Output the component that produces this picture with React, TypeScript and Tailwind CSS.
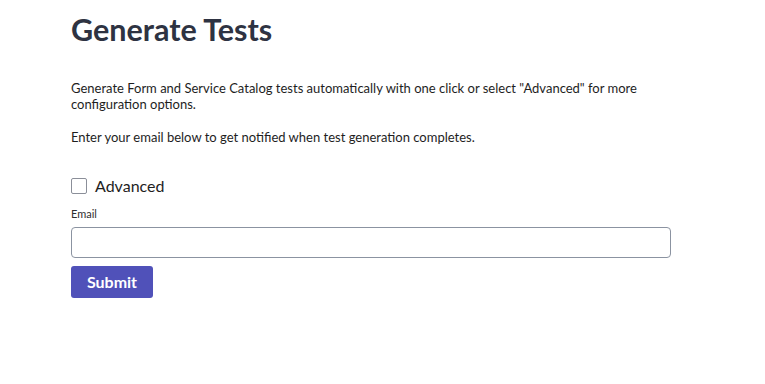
import React from "react";

export default function App() {
  return (
    <div className="w-[765px] h-[384px] bg-white pl-[71px] pt-[10px]" style={{ fontFamily: "Lato, 'Noto Sans', sans-serif" }}>
      <h1 className="text-[30.5px] font-bold text-[#2e3342] leading-[38px]">Generate Tests</h1>
      <p className="mt-[32px] text-[13px] leading-[16px] text-[#1e1e1e] w-[600px]">
        Generate Form and Service Catalog tests automatically with one click or select "Advanced" for more configuration options.
      </p>
      <p className="mt-[17px] text-[13px] leading-[16px] text-[#1e1e1e]">
        Enter your email below to get notified when test generation completes.
      </p>
      <label className="mt-[31px] flex items-center gap-[8px]">
        <span className="w-[16px] h-[16px] border border-[#8b8f99] rounded-[2px] bg-white"></span>
        <span className="text-[16px] text-[#1e1e1e] leading-[20px]">Advanced</span>
      </label>
      <div className="mt-[11px] text-[11px] leading-[14px] text-[#2e2e2e]">Email</div>
      <input className="mt-[6px] block w-[600px] h-[31px] border border-[#8b93a1] rounded-[4px] bg-white outline-none" />
      <button className="mt-[8px] h-[32px] w-[82px] bg-[#5051b9] text-white font-bold text-[16px] leading-[30px] rounded-[3px]">Submit</button>
    </div>
  );
}
